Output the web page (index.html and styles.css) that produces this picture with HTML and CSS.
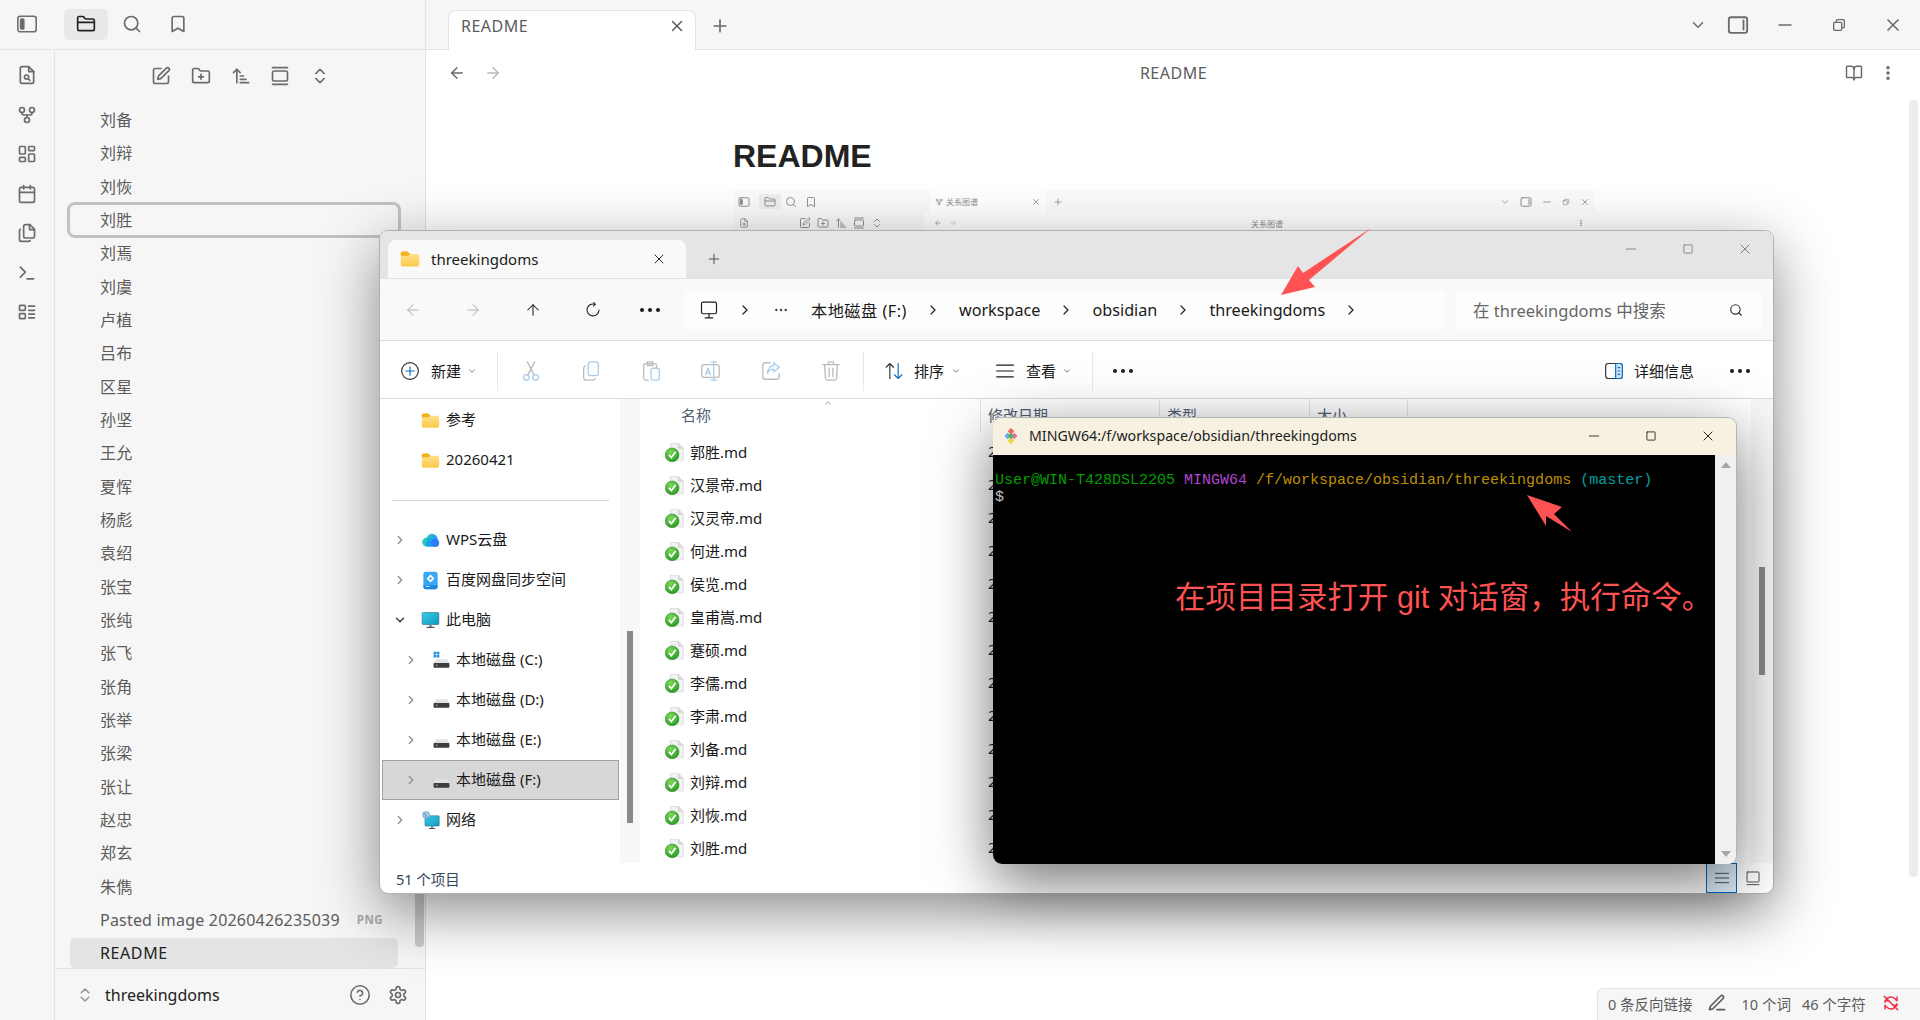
FILE: index.html
```html
<!DOCTYPE html>
<html lang="zh-CN">
<head>
    <meta charset="UTF-8">
    <title>README - threekingdoms - Obsidian</title>
    <link rel="stylesheet" href="styles.css">
</head>
<body>
    <svg class="sprite" xmlns="http://www.w3.org/2000/svg">
        <defs>
            <linearGradient id="folderFill" x1="0" y1="0" x2="0" y2="1"><stop offset="0" stop-color="#ffe793"/><stop offset="1" stop-color="#fcc94d"/></linearGradient>
            <linearGradient id="cloudFill" x1="0" y1="0" x2="1" y2="1"><stop offset="0" stop-color="#27d3a8"/><stop offset="0.55" stop-color="#1e9ff2"/><stop offset="1" stop-color="#2a6cf0"/></linearGradient>
            <linearGradient id="screenFill" x1="0" y1="0" x2="1" y2="1"><stop offset="0" stop-color="#34d0e4"/><stop offset="1" stop-color="#1696c4"/></linearGradient>
            <radialGradient id="okFill" cx="0.4" cy="0.3" r="0.8"><stop offset="0" stop-color="#7ed957"/><stop offset="1" stop-color="#1f9420"/></radialGradient>
        </defs>
        <symbol id="i-panel" viewBox="0 0 24 24"><rect x="2" y="3.5" width="20" height="17" rx="2.5"/><rect x="5" y="6.5" width="3.5" height="11" rx="1" fill="currentColor"/></symbol>
        <symbol id="i-panel-r" viewBox="0 0 24 24"><rect x="2" y="3.5" width="20" height="17" rx="2.5"/><path d="M18 7v10"/></symbol>
        <symbol id="i-folder" viewBox="0 0 24 24"><path d="M20 20a2 2 0 0 0 2-2V8a2 2 0 0 0-2-2h-7.9a2 2 0 0 1-1.69-.9L9.6 3.9A2 2 0 0 0 7.93 3H4a2 2 0 0 0-2 2v13a2 2 0 0 0 2 2Z"/><path d="M2 10h20"/></symbol>
        <symbol id="i-search" viewBox="0 0 24 24"><circle cx="11" cy="11" r="8"/><path d="m21 21-4.3-4.3"/></symbol>
        <symbol id="i-bookmark" viewBox="0 0 24 24"><path d="m19 21-7-4-7 4V5a2 2 0 0 1 2-2h10a2 2 0 0 1 2 2v16z"/></symbol>
        <symbol id="i-filesearch" viewBox="0 0 24 24"><path d="M14 2H6a2 2 0 0 0-2 2v16a2 2 0 0 0 2 2h12a2 2 0 0 0 2-2V8z"/><path d="M14 2v6h6"/><circle cx="11.5" cy="14.5" r="2.5"/><path d="m13.5 16.5 2 2"/></symbol>
        <symbol id="i-graph" viewBox="0 0 24 24"><circle cx="12" cy="18" r="3"/><circle cx="6" cy="6" r="3"/><circle cx="18" cy="6" r="3"/><path d="M18 9v1a2 2 0 0 1-2 2H8a2 2 0 0 1-2-2V9"/><path d="M12 12v3"/></symbol>
        <symbol id="i-dash" viewBox="0 0 24 24"><rect x="3" y="3" width="7" height="9" rx="1"/><rect x="14" y="3" width="7" height="5" rx="1"/><rect x="14" y="12" width="7" height="9" rx="1"/><rect x="3" y="16" width="7" height="5" rx="1"/></symbol>
        <symbol id="i-cal" viewBox="0 0 24 24"><path d="M8 2v4"/><path d="M16 2v4"/><rect x="3" y="4" width="18" height="18" rx="2"/><path d="M3 10h18"/></symbol>
        <symbol id="i-files" viewBox="0 0 24 24"><path d="M15.5 2H10a2 2 0 0 0-2 2v12a2 2 0 0 0 2 2h9a2 2 0 0 0 2-2V7.5z"/><path d="M15 2v6h6"/><path d="M4 7.5a2 2 0 0 0-1 1.7V20a2 2 0 0 0 2 2h9a2 2 0 0 0 1.7-1"/></symbol>
        <symbol id="i-term" viewBox="0 0 24 24"><path d="m4 17 6-6-6-6"/><path d="M12 19h8"/></symbol>
        <symbol id="i-tasks" viewBox="0 0 24 24"><rect x="3" y="4" width="7" height="6" rx="1"/><rect x="3" y="14" width="7" height="6" rx="1"/><path d="M14 5h7M14 10h7M14 14.500h7M14 19h7"/></symbol>
        <symbol id="i-edit" viewBox="0 0 24 24"><path d="M12 3H5a2 2 0 0 0-2 2v14a2 2 0 0 0 2 2h14a2 2 0 0 0 2-2v-7"/><path d="M18.375 2.625a1 1 0 0 1 3 3l-9.013 9.014a2 2 0 0 1-.853.505l-2.873.84a.5.5 0 0 1-.62-.62l.84-2.873a2 2 0 0 1 .506-.852z"/></symbol>
        <symbol id="i-folderplus" viewBox="0 0 24 24"><path d="M12 10v6"/><path d="M9 13h6"/><path d="M20 20a2 2 0 0 0 2-2V8a2 2 0 0 0-2-2h-7.900a2 2 0 0 1-1.690-.9L9.600 3.900A2 2 0 0 0 7.930 3H4a2 2 0 0 0-2 2v13a2 2 0 0 0 2 2Z"/></symbol>
        <symbol id="i-sort" viewBox="0 0 24 24"><path d="m3 8 4-4 4 4"/><path d="M7 4v16"/><path d="M11 12h4"/><path d="M11 16h7"/><path d="M11 20h10"/></symbol>
        <symbol id="i-fold" viewBox="0 0 24 24"><rect x="3" y="6" width="18" height="12" rx="2"/><path d="M3 2h18"/><path d="M3 22h18"/></symbol>
        <symbol id="i-updown" viewBox="0 0 24 24"><path d="m7 15 5 5 5-5"/><path d="m7 9 5-5 5 5"/></symbol>
        <symbol id="i-help" viewBox="0 0 24 24"><circle cx="12" cy="12" r="10"/><path d="M9.090 9a3 3 0 0 1 5.830 1c0 2-3 3-3 3"/><path d="M12 17h.01"/></symbol>
        <symbol id="i-gear" viewBox="0 0 24 24"><path d="M12.220 2h-.44a2 2 0 0 0-2 2v.18a2 2 0 0 1-1 1.730l-.43.25a2 2 0 0 1-2 0l-.15-.08a2 2 0 0 0-2.730.73l-.22.38a2 2 0 0 0 .73 2.730l.15.1a2 2 0 0 1 1 1.720v.51a2 2 0 0 1-1 1.740l-.15.09a2 2 0 0 0-.73 2.730l.22.38a2 2 0 0 0 2.730.73l.15-.08a2 2 0 0 1 2 0l.43.25a2 2 0 0 1 1 1.730V20a2 2 0 0 0 2 2h.44a2 2 0 0 0 2-2v-.18a2 2 0 0 1 1-1.730l.43-.25a2 2 0 0 1 2 0l.15.08a2 2 0 0 0 2.730-.73l.22-.39a2 2 0 0 0-.73-2.730l-.15-.08a2 2 0 0 1-1-1.740v-.5a2 2 0 0 1 1-1.740l.15-.09a2 2 0 0 0 .73-2.730l-.22-.38a2 2 0 0 0-2.730-.73l-.15.08a2 2 0 0 1-2 0l-.43-.25a2 2 0 0 1-1-1.730V4a2 2 0 0 0-2-2z"/><circle cx="12" cy="12" r="3"/></symbol>
        <symbol id="i-x" viewBox="0 0 24 24"><path d="M18 6 6 18"/><path d="m6 6 12 12"/></symbol>
        <symbol id="i-plus" viewBox="0 0 24 24"><path d="M5 12h14"/><path d="M12 5v14"/></symbol>
        <symbol id="i-down" viewBox="0 0 24 24"><path d="m6 9 6 6 6-6"/></symbol>
        <symbol id="i-right" viewBox="0 0 24 24"><path d="m9 6 6 6-6 6"/></symbol>
        <symbol id="i-up" viewBox="0 0 24 24"><path d="m6 15 6-6 6 6"/></symbol>
        <symbol id="i-back" viewBox="0 0 24 24"><path d="m12 19-7-7 7-7"/><path d="M19 12H5"/></symbol>
        <symbol id="i-fwd" viewBox="0 0 24 24"><path d="M5 12h14"/><path d="m12 5 7 7-7 7"/></symbol>
        <symbol id="i-arrowup" viewBox="0 0 24 24"><path d="m5 12 7-7 7 7"/><path d="M12 19V5"/></symbol>
        <symbol id="i-min" viewBox="0 0 24 24"><path d="M4 12h16"/></symbol>
        <symbol id="i-max" viewBox="0 0 24 24"><rect x="5" y="5" width="14" height="14" rx="1"/></symbol>
        <symbol id="i-restore" viewBox="0 0 24 24"><rect x="4" y="8" width="12" height="12" rx="1.500"/><path d="M8 8V5.500A1.500 1.500 0 0 1 9.500 4h9A1.500 1.500 0 0 1 20 5.500v9a1.500 1.500 0 0 1-1.500 1.500H16"/></symbol>
        <symbol id="i-book" viewBox="0 0 24 24"><path d="M12 7v14"/><path d="M3 18a1 1 0 0 1-1-1V4a1 1 0 0 1 1-1h5a4 4 0 0 1 4 4 4 4 0 0 1 4-4h5a1 1 0 0 1 1 1v13a1 1 0 0 1-1 1h-6a3 3 0 0 0-3 3 3 3 0 0 0-3-3z"/></symbol>
        <symbol id="i-kebab" viewBox="0 0 24 24"><circle cx="12" cy="5" r="1.300" fill="currentColor"/><circle cx="12" cy="12" r="1.300" fill="currentColor"/><circle cx="12" cy="19" r="1.300" fill="currentColor"/></symbol>
        <symbol id="i-dots" viewBox="0 0 24 24"><circle cx="4" cy="12" r="2" fill="currentColor" stroke="none"/><circle cx="12" cy="12" r="2" fill="currentColor" stroke="none"/><circle cx="20" cy="12" r="2" fill="currentColor" stroke="none"/></symbol>
        <symbol id="i-pen" viewBox="0 0 24 24"><path d="M12 20h9"/><path d="M16.376 3.622a1 1 0 0 1 3.002 3.002L7.368 18.635a2 2 0 0 1-.855.506l-2.872.838a.5.5 0 0 1-.62-.62l.838-2.872a2 2 0 0 1 .506-.854z"/></symbol>
        <symbol id="i-nosync" viewBox="0 0 24 24"><path d="M3 3l18 18"/><path d="M4 11a8 8 0 0 1 13-5l3 3V4"/><path d="M20 13a8 8 0 0 1-13 5l-3-3v5"/><path d="M4 9h5M15 15h5"/></symbol>
        <symbol id="i-refresh" viewBox="0 0 24 24"><path d="M14.500 4.300A8 8 0 1 0 20 12"/><path d="M13 2l2 2.500L12.500 7"/></symbol>
        <symbol id="i-pc" viewBox="0 0 24 24"><rect x="3" y="2.500" width="18" height="14" rx="2"/><path d="M12 16.500V21M7.500 21.500h9"/></symbol>
        <symbol id="i-pluscircle" viewBox="0 0 24 24"><circle cx="12" cy="12" r="10" stroke="#333"/><path d="M12 7v10M7 12h10" stroke="#0a6fc2"/></symbol>
        <symbol id="i-cut" viewBox="0 0 24 24"><circle cx="7" cy="19" r="3" stroke="#a8cdec"/><circle cx="17" cy="19" r="3" stroke="#a8cdec"/><path d="M8.500 16.500 16 2M15.500 16.500 8 2" stroke="#bbb"/></symbol>
        <symbol id="i-copy" viewBox="0 0 24 24"><rect x="9" y="2" width="11" height="15" rx="2.500" stroke="#a8cdec"/><path d="M6 6.500A2.500 2.500 0 0 0 4 9v10a3 3 0 0 0 3 3h7a2.500 2.500 0 0 0 2.500-2" stroke="#bbb"/></symbol>
        <symbol id="i-paste" viewBox="0 0 24 24"><rect x="12" y="9" width="9" height="13" rx="2" stroke="#a8cdec"/><path d="M9 22H6a2 2 0 0 1-2-2V6a2 2 0 0 1 2-2h10a2 2 0 0 1 2 2v2M8 2h6v4H8z" stroke="#bbb"/></symbol>
        <symbol id="i-rename" viewBox="0 0 24 24"><path d="M12 2h6M12 22h6M15 2v20" stroke="#a8cdec"/><rect x="2" y="5" width="19" height="14" rx="2.500" stroke="#bbb"/><path d="m6 16 2.800-7L11.500 16M7 14h3.500" stroke="#a8cdec"/></symbol>
        <symbol id="i-share" viewBox="0 0 24 24"><path d="M11 3H6a3 3 0 0 0-3 3v12a3 3 0 0 0 3 3h12a3 3 0 0 0 3-3v-3" stroke="#bbb"/><path d="M15 3l6 5-6 5v-3c-4 0-6 2-7 5 0-5 3-9 7-9z" stroke="#a8cdec"/></symbol>
        <symbol id="i-trash" viewBox="0 0 24 24"><path d="M3 5h18M9 5V3a1 1 0 0 1 1-1h4a1 1 0 0 1 1 1v2M5 5l1 15a2 2 0 0 0 2 2h8a2 2 0 0 0 2-2l1-15M10 9v9M14 9v9" stroke="#bbb"/></symbol>
        <symbol id="i-sortwin" viewBox="0 0 24 24"><path d="M7 21V3M2.500 7.500 7 3l4.500 4.500" stroke="#333"/><path d="M17 3v18M12.500 16.500 17 21l4.500-4.500" stroke="#0a6fc2"/></symbol>
        <symbol id="i-lines" viewBox="0 0 24 24"><path d="M2 5h20M2 12h20M2 19h20"/></symbol>
        <symbol id="i-details" viewBox="0 0 24 24"><rect x="2" y="3" width="20" height="18" rx="3" stroke="#333"/><path d="M14 3h5a3 3 0 0 1 3 3v12a3 3 0 0 1-3 3h-5z" fill="#cfe6fa" stroke="#0a6fc2"/><path d="M17 8h2M17 12h2M17 16h2" stroke="#0a6fc2"/></symbol>
        <symbol id="i-viewtile" viewBox="0 0 24 24"><rect x="3" y="3" width="18" height="15" rx="1"/><path d="M3 22h18"/></symbol>
        <symbol id="w-folder" viewBox="0 0 24 24"><path d="M1 5a2 2 0 0 1 2-2h6l3 3h9a2 2 0 0 1 2 2v11a2 2 0 0 1-2 2H3a2 2 0 0 1-2-2z" fill="url(#folderFill)"/><path d="M1 5a2 2 0 0 1 2-2h6l3 3-2 2H1z" fill="#f2b01e"/></symbol>
        <symbol id="w-cloud" viewBox="0 0 24 24"><circle cx="7" cy="14" r="5.500" fill="#23cfb4"/><circle cx="14" cy="10.500" r="7" fill="url(#cloudFill)"/><rect x="6" y="13" width="14" height="7" rx="3" fill="#1c9df0"/><circle cx="18" cy="15" r="5" fill="#2b7df0"/></symbol>
        <symbol id="w-baidu" viewBox="0 0 24 24"><rect x="3" y="1" width="18" height="22" rx="3" fill="#3aa7f5"/><path d="M3 18h18v2a3 3 0 0 1-3 3H6a3 3 0 0 1-3-3z" fill="#1d86e0"/><path d="M12 4.500 17 9.500l-5 5-5-5z" fill="#fff"/><path d="M12 7.500 14 9.500l-2 2-2-2z" fill="#3aa7f5"/><path d="M6 19.500h5" stroke="#d4ecff" stroke-width="1.200"/></symbol>
        <symbol id="w-pc" viewBox="0 0 24 24"><rect x="1.500" y="2" width="21" height="15" rx="1" fill="url(#screenFill)" stroke="#2d6e87" stroke-width="0.800"/><rect x="10.500" y="17" width="3" height="3.500" fill="#6b8894"/><rect x="7" y="20" width="10" height="1.500" fill="#556"/></symbol>
        <symbol id="w-drive" viewBox="0 0 24 24"><path d="M5 10.500h14l3 5H2z" fill="#e2e2e2"/><rect x="2" y="15" width="20" height="6" rx="1" fill="#3d3d3d"/><rect x="5" y="17.300" width="2" height="1.400" fill="#7ed36b"/></symbol>
        <symbol id="w-drivec" viewBox="0 0 24 24"><use href="#w-drive"/><path d="M2 1h3.300v3.300H2zM6 1h3.300v3.300H6zM2 5h3.300v3.300H2zM6 5h3.300v3.300H6z" fill="#1f8fe8"/></symbol>
        <symbol id="w-net" viewBox="0 0 24 24"><rect x="5" y="6" width="18" height="13" rx="1" fill="url(#screenFill)" stroke="#2d6e87" stroke-width="0.700"/><rect x="12.500" y="19" width="3" height="2.500" fill="#6b8894"/><rect x="10" y="21.500" width="8" height="1.200" fill="#556"/><circle cx="6.500" cy="5" r="4.500" fill="#9fc8e6" stroke="#5c8fb5" stroke-width="0.600"/><path d="M3 3c2 0 3 1 3 3s2 3 3 2" stroke="#3d7ca8" fill="none" stroke-width="1"/></symbol>
        <symbol id="w-md" viewBox="0 0 24 24"><path d="M7 0.500h10l6 6v16H7z" fill="#f3f3f3" stroke="#d2d2d2" stroke-width="0.900"/><path d="M17 0.500v6h6" fill="#dedede" stroke="#c8c8c8" stroke-width="0.900"/><circle cx="9" cy="15" r="8.700" fill="url(#okFill)" stroke="#197d1b" stroke-width="0.600"/><path d="M5 15l3 3.500L13.500 11" fill="none" stroke="#fff" stroke-width="2.200"/></symbol>
        <symbol id="w-git" viewBox="0 0 24 24"><path d="M7 2 12 7 7 12 2 7z" transform="translate(0 5)" fill="#6ba6f2"/><path d="M12 0l5 5-5 5-5-5z" fill="#ef6a5a"/><path d="M17 7l5 5-5 5-5-5z" fill="#f06ab0"/><path d="M12 14l5 5-5 5-5-5z" fill="#f5cf45"/><path d="M12 7l5 5-5 5-5-5z" fill="#59b25a"/></symbol>
    </svg>

    <div class="app">
        <aside class="side">
            <div class="side-top">
                <svg class="ic ic-22 side-toggle"><use href="#i-panel"/></svg>
                <span class="side-tab is-on"><svg class="ic ic-20"><use href="#i-folder"/></svg></span>
                <span class="side-tab"><svg class="ic ic-20"><use href="#i-search"/></svg></span>
                <span class="side-tab"><svg class="ic ic-20"><use href="#i-bookmark"/></svg></span>
            </div>
            <div class="side-body">
                <nav class="ribbon">
                    <svg class="ic ic-20"><use href="#i-filesearch"/></svg>
                    <svg class="ic ic-20"><use href="#i-graph"/></svg>
                    <svg class="ic ic-20"><use href="#i-dash"/></svg>
                    <svg class="ic ic-20"><use href="#i-cal"/></svg>
                    <svg class="ic ic-20"><use href="#i-files"/></svg>
                    <svg class="ic ic-20"><use href="#i-term"/></svg>
                    <svg class="ic ic-20"><use href="#i-tasks"/></svg>
                </nav>
                <section class="panel">
                    <div class="panel-nav">
                        <svg class="ic ic-20"><use href="#i-edit"/></svg>
                        <svg class="ic ic-20"><use href="#i-folderplus"/></svg>
                        <svg class="ic ic-20"><use href="#i-sort"/></svg>
                        <svg class="ic ic-20"><use href="#i-fold"/></svg>
                        <svg class="ic ic-20"><use href="#i-updown"/></svg>
                    </div>
                    <div class="tree-list">
                        <div class="note">刘备</div>
                        <div class="note">刘辩</div>
                        <div class="note">刘恢</div>
                        <div class="note is-focus">刘胜</div>
                        <div class="note">刘焉</div>
                        <div class="note">刘虞</div>
                        <div class="note">卢植</div>
                        <div class="note">吕布</div>
                        <div class="note">区星</div>
                        <div class="note">孙坚</div>
                        <div class="note">王允</div>
                        <div class="note">夏恽</div>
                        <div class="note">杨彪</div>
                        <div class="note">袁绍</div>
                        <div class="note">张宝</div>
                        <div class="note">张纯</div>
                        <div class="note">张飞</div>
                        <div class="note">张角</div>
                        <div class="note">张举</div>
                        <div class="note">张梁</div>
                        <div class="note">张让</div>
                        <div class="note">赵忠</div>
                        <div class="note">郑玄</div>
                        <div class="note">朱儁</div>
                        <div class="note">Pasted image 20260426235039<span class="note-tag">PNG</span></div>
                        <div class="note is-active">README</div>
                        <div class="side-thumb"></div>
                    </div>
                    <div class="vault">
                        <svg class="ic ic-18 vault-updown"><use href="#i-updown"/></svg>
                        <span class="vault-name">threekingdoms</span>
                        <svg class="ic ic-22 vault-help"><use href="#i-help"/></svg>
                        <svg class="ic ic-20"><use href="#i-gear"/></svg>
                    </div>
                </section>
            </div>
        </aside>

        <main class="main">
            <header class="tabbar">
                <div class="tab">
                    <span class="tab-name">README</span>
                    <svg class="ic ic-18"><use href="#i-x"/></svg>
                </div>
                <svg class="ic ic-20 tab-add"><use href="#i-plus"/></svg>
                <div class="tabbar-right">
                    <svg class="ic ic-18"><use href="#i-down"/></svg>
                    <svg class="ic ic-22"><use href="#i-panel-r"/></svg>
                    <svg class="ic ic-18 win-btn"><use href="#i-min"/></svg>
                    <svg class="ic ic-16 win-btn"><use href="#i-restore"/></svg>
                    <svg class="ic ic-20 win-btn"><use href="#i-x"/></svg>
                </div>
            </header>
            <div class="viewbar">
                <svg class="ic ic-18"><use href="#i-back"/></svg>
                <svg class="ic ic-18 is-dim"><use href="#i-fwd"/></svg>
                <span class="view-title">README</span>
                <svg class="ic ic-18"><use href="#i-book"/></svg>
                <svg class="ic ic-18"><use href="#i-kebab"/></svg>
            </div>
            <article class="doc">
                <h1 class="doc-title">README</h1>
                <div class="shot">
                    <div class="shot-top">
                        <div class="shot-side">
                            <svg class="ic ic-12"><use href="#i-panel"/></svg>
                            <span class="shot-on"><svg class="ic ic-12"><use href="#i-folder"/></svg></span>
                            <svg class="ic ic-12"><use href="#i-search"/></svg>
                            <svg class="ic ic-12 shot-mark"><use href="#i-bookmark"/></svg>
                        </div>
                        <div class="shot-tab">
                            <svg class="ic ic-8"><use href="#i-graph"/></svg>
                            <span>关系图谱</span>
                            <svg class="ic ic-10 shot-x"><use href="#i-x"/></svg>
                        </div>
                        <svg class="ic ic-10 shot-add"><use href="#i-plus"/></svg>
                        <div class="shot-right">
                            <svg class="ic ic-10"><use href="#i-down"/></svg>
                            <svg class="ic ic-12"><use href="#i-panel-r"/></svg>
                            <svg class="ic ic-10"><use href="#i-min"/></svg>
                            <svg class="ic ic-8"><use href="#i-restore"/></svg>
                            <svg class="ic ic-10"><use href="#i-x"/></svg>
                        </div>
                    </div>
                    <div class="shot-row">
                        <div class="shot-rail"><svg class="ic ic-10"><use href="#i-filesearch"/></svg></div>
                        <div class="shot-tools">
                            <svg class="ic ic-12"><use href="#i-edit"/></svg>
                            <svg class="ic ic-12"><use href="#i-folderplus"/></svg>
                            <svg class="ic ic-12"><use href="#i-sort"/></svg>
                            <svg class="ic ic-12"><use href="#i-fold"/></svg>
                            <svg class="ic ic-12"><use href="#i-updown"/></svg>
                        </div>
                        <div class="shot-view">
                            <svg class="ic ic-8"><use href="#i-back"/></svg>
                            <svg class="ic ic-8 is-dim"><use href="#i-fwd"/></svg>
                            <span class="shot-title">关系图谱</span>
                            <svg class="ic ic-8"><use href="#i-kebab"/></svg>
                        </div>
                    </div>
                </div>
            </article>
            <div class="doc-thumb"></div>
            <footer class="statusbar">
                <span>0 条反向链接</span>
                <svg class="ic ic-20 status-pen"><use href="#i-pen"/></svg>
                <span>10 个词</span>
                <span>46 个字符</span>
                <svg class="ic ic-18 status-sync"><use href="#i-nosync"/></svg>
            </footer>
        </main>
    </div>

    <!-- file explorer window -->
    <section class="explorer">
        <div class="ex-title">
            <div class="ex-tab">
                <svg class="ic-w ic-20"><use href="#w-folder"/></svg>
                <span class="ex-tab-name">threekingdoms</span>
                <svg class="ic ic-16 ex-thin"><use href="#i-x"/></svg>
            </div>
            <svg class="ic ic-16 ex-add ex-thin"><use href="#i-plus"/></svg>
            <div class="ex-wins">
                <span class="ex-win"><svg class="ic ic-14 ex-thin"><use href="#i-min"/></svg></span>
                <span class="ex-win"><svg class="ic ic-14 ex-thin"><use href="#i-max"/></svg></span>
                <span class="ex-win"><svg class="ic ic-16 ex-thin"><use href="#i-x"/></svg></span>
            </div>
        </div>
        <div class="ex-nav">
            <span class="ex-navbtn is-off"><svg class="ic ic-18 ex-thin"><use href="#i-back"/></svg></span>
            <span class="ex-navbtn is-off"><svg class="ic ic-18 ex-thin"><use href="#i-fwd"/></svg></span>
            <span class="ex-navbtn"><svg class="ic ic-18 ex-thin"><use href="#i-arrowup"/></svg></span>
            <span class="ex-navbtn"><svg class="ic ic-18 ex-thin"><use href="#i-refresh"/></svg></span>
            <span class="ex-navbtn ex-navdots"><svg class="ic ic-24"><use href="#i-dots"/></svg></span>
            <div class="ex-addr">
                <svg class="ic ic-20 ex-thin"><use href="#i-pc"/></svg>
                <svg class="ic ic-16 crumb-sep"><use href="#i-right"/></svg>
                <svg class="ic ic-14 crumb-more"><use href="#i-dots"/></svg>
                <span class="crumb crumb-drive">本地磁盘 (F:)</span>
                <svg class="ic ic-16 crumb-sep"><use href="#i-right"/></svg>
                <span class="crumb">workspace</span>
                <svg class="ic ic-16 crumb-sep"><use href="#i-right"/></svg>
                <span class="crumb">obsidian</span>
                <svg class="ic ic-16 crumb-sep"><use href="#i-right"/></svg>
                <span class="crumb">threekingdoms</span>
                <svg class="ic ic-16 crumb-sep"><use href="#i-right"/></svg>
            </div>
            <div class="ex-search">
                <span>在 threekingdoms 中搜索</span>
                <svg class="ic ic-14"><use href="#i-search"/></svg>
            </div>
        </div>
        <div class="ex-tools">
            <div class="tool-label tool-new">
                <svg class="ic ic-20 ex-thin"><use href="#i-pluscircle"/></svg>
                <span>新建</span>
                <svg class="ic ic-10 ex-thin"><use href="#i-down"/></svg>
            </div>
            <i class="tool-div"></i>
            <span class="tool"><svg class="ic ic-22 ex-thin"><use href="#i-cut"/></svg></span>
            <span class="tool"><svg class="ic ic-22 ex-thin"><use href="#i-copy"/></svg></span>
            <span class="tool"><svg class="ic ic-22 ex-thin"><use href="#i-paste"/></svg></span>
            <span class="tool"><svg class="ic ic-22 ex-thin"><use href="#i-rename"/></svg></span>
            <span class="tool"><svg class="ic ic-22 ex-thin"><use href="#i-share"/></svg></span>
            <span class="tool"><svg class="ic ic-22 ex-thin"><use href="#i-trash"/></svg></span>
            <i class="tool-div"></i>
            <div class="tool-label tool-sort">
                <svg class="ic ic-20 ex-thin"><use href="#i-sortwin"/></svg>
                <span>排序</span>
                <svg class="ic ic-10 ex-thin"><use href="#i-down"/></svg>
            </div>
            <div class="tool-label tool-view">
                <svg class="ic ic-20 ex-thin"><use href="#i-lines"/></svg>
                <span>查看</span>
                <svg class="ic ic-10 ex-thin"><use href="#i-down"/></svg>
            </div>
            <i class="tool-div tool-div-last"></i>
            <span class="tool tool-more"><svg class="ic ic-24"><use href="#i-dots"/></svg></span>
            <div class="tool-label tool-info">
                <svg class="ic ic-20 ex-thin"><use href="#i-details"/></svg>
                <span>详细信息</span>
            </div>
            <span class="tool tool-end"><svg class="ic ic-24"><use href="#i-dots"/></svg></span>
        </div>
        <div class="ex-body">
            <div class="ex-tree">
                <div class="tnode"><svg class="ic tchev is-none"><use href="#i-right"/></svg><svg class="ic-w ic-19"><use href="#w-folder"/></svg><span>参考</span></div>
                <div class="tnode"><svg class="ic tchev is-none"><use href="#i-right"/></svg><svg class="ic-w ic-19"><use href="#w-folder"/></svg><span>20260421</span></div>
                <hr class="tsep">
                <div class="tnode"><svg class="ic tchev"><use href="#i-right"/></svg><svg class="ic-w ic-19"><use href="#w-cloud"/></svg><span>WPS云盘</span></div>
                <div class="tnode"><svg class="ic tchev"><use href="#i-right"/></svg><svg class="ic-w ic-19"><use href="#w-baidu"/></svg><span>百度网盘同步空间</span></div>
                <div class="tnode"><svg class="ic tchev is-open"><use href="#i-down"/></svg><svg class="ic-w ic-19"><use href="#w-pc"/></svg><span>此电脑</span></div>
                <div class="tnode is-child"><svg class="ic tchev"><use href="#i-right"/></svg><svg class="ic-w ic-19"><use href="#w-drivec"/></svg><span>本地磁盘 (C:)</span></div>
                <div class="tnode is-child"><svg class="ic tchev"><use href="#i-right"/></svg><svg class="ic-w ic-19"><use href="#w-drive"/></svg><span>本地磁盘 (D:)</span></div>
                <div class="tnode is-child"><svg class="ic tchev"><use href="#i-right"/></svg><svg class="ic-w ic-19"><use href="#w-drive"/></svg><span>本地磁盘 (E:)</span></div>
                <div class="tnode is-child is-sel"><svg class="ic tchev"><use href="#i-right"/></svg><svg class="ic-w ic-19"><use href="#w-drive"/></svg><span>本地磁盘 (F:)</span></div>
                <div class="tnode"><svg class="ic tchev"><use href="#i-right"/></svg><svg class="ic-w ic-19"><use href="#w-net"/></svg><span>网络</span></div>
            </div>
            <div class="ex-gutter"><div class="ex-gutter-thumb"></div></div>
            <div class="ex-files">
                <div class="fhead">
                    <span class="fhead-cell fhead-name">名称<svg class="ic ic-10 fhead-sort ex-thin"><use href="#i-up"/></svg></span>
                    <span class="fhead-cell">修改日期</span>
                    <span class="fhead-cell">类型</span>
                    <span class="fhead-cell">大小</span>
                </div>
                <div class="frow"><svg class="ic-w ic-19"><use href="#w-md"/></svg><span class="fname">郭胜.md</span><span>2026/4/26</span></div>
                <div class="frow"><svg class="ic-w ic-19"><use href="#w-md"/></svg><span class="fname">汉景帝.md</span><span>2026/4/26</span></div>
                <div class="frow"><svg class="ic-w ic-19"><use href="#w-md"/></svg><span class="fname">汉灵帝.md</span><span>2026/4/26</span></div>
                <div class="frow"><svg class="ic-w ic-19"><use href="#w-md"/></svg><span class="fname">何进.md</span><span>2026/4/26</span></div>
                <div class="frow"><svg class="ic-w ic-19"><use href="#w-md"/></svg><span class="fname">侯览.md</span><span>2026/4/26</span></div>
                <div class="frow"><svg class="ic-w ic-19"><use href="#w-md"/></svg><span class="fname">皇甫嵩.md</span><span>2026/4/26</span></div>
                <div class="frow"><svg class="ic-w ic-19"><use href="#w-md"/></svg><span class="fname">蹇硕.md</span><span>2026/4/26</span></div>
                <div class="frow"><svg class="ic-w ic-19"><use href="#w-md"/></svg><span class="fname">李儒.md</span><span>2026/4/26</span></div>
                <div class="frow"><svg class="ic-w ic-19"><use href="#w-md"/></svg><span class="fname">李肃.md</span><span>2026/4/26</span></div>
                <div class="frow"><svg class="ic-w ic-19"><use href="#w-md"/></svg><span class="fname">刘备.md</span><span>2026/4/26</span></div>
                <div class="frow"><svg class="ic-w ic-19"><use href="#w-md"/></svg><span class="fname">刘辩.md</span><span>2026/4/26</span></div>
                <div class="frow"><svg class="ic-w ic-19"><use href="#w-md"/></svg><span class="fname">刘恢.md</span><span>2026/4/26</span></div>
                <div class="frow"><svg class="ic-w ic-19"><use href="#w-md"/></svg><span class="fname">刘胜.md</span><span>2026/4/26</span></div>
            </div>
            <div class="ex-rail"><div class="ex-rail-thumb"></div></div>
        </div>
        <div class="ex-status">
            <span class="ex-count">51 个项目</span>
            <span class="ex-views">
                <span class="ex-view is-on"><svg class="ic ic-16 ex-thin"><use href="#i-lines"/></svg></span>
                <span class="ex-view"><svg class="ic ic-16 ex-thin"><use href="#i-viewtile"/></svg></span>
            </span>
        </div>
    </section>

    <!-- git bash window -->
    <section class="mintty">
        <div class="mt-title">
            <svg class="ic-w ic-16"><use href="#w-git"/></svg>
            <span class="mt-name">MINGW64:/f/workspace/obsidian/threekingdoms</span>
            <span class="mt-win"><svg class="ic ic-14 mt-stroke"><use href="#i-min"/></svg></span>
            <span class="mt-win"><svg class="ic ic-14 mt-stroke"><use href="#i-max"/></svg></span>
            <span class="mt-win"><svg class="ic ic-16 mt-stroke"><use href="#i-x"/></svg></span>
        </div>
        <div class="mt-body">
            <pre class="mt-screen"><span class="c-green">User@WIN-T428DSL2205</span> <span class="c-purple">MINGW64</span> <span class="c-yellow">/f/workspace/obsidian/threekingdoms</span> <span class="c-cyan">(master)</span>
<span class="c-grey">$</span></pre>
            <div class="mt-bar"><i class="mt-up"></i><i class="mt-down"></i></div>
        </div>
    </section>

    <!-- red annotations drawn on the picture -->
    <svg class="marks" viewBox="0 0 1920 1020" xmlns="http://www.w3.org/2000/svg">
        <path d="M1371 228 1309 280 1315 287 1281 295 1298 266 1303 273Z"/>
        <path d="M1527 495 1562 507 1554 514 1572 532 1546 516 1546 526Z"/>
    </svg>
    <div class="mark-text">在项目目录打开 git 对话窗，执行命令。</div>
</body>
</html>
```
FILE: styles.css
```css
* {
    box-sizing: border-box;
}
html, body {
    margin: 0;
    padding: 0;
    height: 1020px;
    overflow: hidden;
}
body {
    position: relative;
    background: #fff;
    color: #5c5c5c;
    font-family: "Noto Sans", "Noto Sans CJK SC", sans-serif;
    font-size: 16px;
}
.sprite {
    position: absolute;
    width: 0;
    height: 0;
}

/* icons */
.ic {
    flex: none;
    fill: none;
    stroke: currentColor;
    stroke-width: 2;
    stroke-linecap: round;
    stroke-linejoin: round;
}
.ic-w { flex: none; }
.ic-8 { width: 8px; height: 8px; }
.ic-10 { width: 10px; height: 10px; }
.ic-12 { width: 12px; height: 12px; }
.ic-14 { width: 14px; height: 14px; }
.ic-16 { width: 16px; height: 16px; }
.ic-18 { width: 18px; height: 18px; }
.ic-19 { width: 19px; height: 19px; }
.ic-20 { width: 20px; height: 20px; }
.ic-22 { width: 22px; height: 22px; }
.ic-24 { width: 24px; height: 24px; }
.is-dim { opacity: .45; }

/* obsidian shell */
.app {
    display: flex;
    height: 1020px;
}
.side {
    width: 426px;
    flex: none;
    display: flex;
    flex-direction: column;
    background: #f6f6f6;
    border-right: 1px solid #e3e3e3;
}
.side-top {
    height: 50px;
    flex: none;
    display: flex;
    align-items: center;
    padding-bottom: 1px;
    border-bottom: 1px solid #e3e3e3;
    color: #6b6b6b;
}
.side-toggle {
    margin-left: 16px;
    margin-right: 26px;
    stroke-width: 1.7;
}
.side-tab {
    width: 44px;
    height: 31px;
    margin-right: 2px;
    margin-top: 0;
    display: flex;
    align-items: center;
    justify-content: center;
    border-radius: 5px;
}
.side-tab.is-on {
    background: #e9e9e9;
    color: #222;
}
.side-body {
    flex: 1;
    min-height: 0;
    display: flex;
}
.ribbon {
    width: 55px;
    flex: none;
    display: flex;
    flex-direction: column;
    align-items: center;
    gap: 19.500px;
    padding-top: 15px;
    border-right: 1px solid #e3e3e3;
    color: #6b6b6b;
}
.panel {
    flex: 1;
    min-width: 0;
    display: flex;
    flex-direction: column;
}
.panel-nav {
    height: 52px;
    margin-bottom: 2px;
    flex: none;
    display: flex;
    align-items: center;
    justify-content: center;
    gap: 19.700px;
    padding-left: 1px;
    color: #6b6b6b;
}
.tree-list {
    position: relative;
    flex: 1;
    min-height: 0;
    overflow: hidden;
    padding: 1px 27px 0 15px;
}
.note {
    height: 30px;
    margin-bottom: 3.330px;
    padding-left: 30px;
    display: flex;
    align-items: center;
    border-radius: 5px;
    line-height: 30px;
    letter-spacing: .2px;
    white-space: nowrap;
}
.note.is-focus {
    box-shadow: 0 0 0 3px #c2c2c2;
}
.note.is-active {
    background: #e4e4e4;
    color: #222;
    letter-spacing: .6px;
}
.note-tag {
    margin-left: 17px;
    color: #ababab;
    font-size: 11.500px;
    font-weight: 700;
    letter-spacing: .5px;
}
.side-thumb {
    position: absolute;
    right: 1px;
    bottom: 21px;
    width: 9px;
    height: 220px;
    border-radius: 4px;
    background: #cbcbcb;
}
.vault {
    height: 52px;
    flex: none;
    display: flex;
    align-items: center;
    padding-left: 21px;
    border-top: 1px solid #e3e3e3;
    color: #6b6b6b;
}
.vault-updown {
    opacity: .7;
}
.vault-name {
    margin-left: 11px;
    color: #222;
    font-size: 16px;
}
.vault-help {
    margin-left: auto;
    stroke-width: 1.7;
}
.vault .ic-20 {
    margin: 0 17px 0 17px;
}
.main {
    position: relative;
    flex: 1;
    min-width: 0;
    display: flex;
    flex-direction: column;
}
.tabbar {
    height: 50px;
    flex: none;
    display: flex;
    align-items: flex-end;
    padding-left: 22px;
    background: #f6f6f6;
    border-bottom: 1px solid #e3e3e3;
}
.tab {
    width: 248px;
    height: 40px;
    margin-bottom: -1px;
    display: flex;
    align-items: center;
    justify-content: space-between;
    padding: 0 9px 10px 12px;
    background: #fff;
    border: 1px solid #e3e3e3;
    border-bottom: none;
    border-radius: 8px 8px 0 0;
    color: #5c5c5c;
    font-size: 16px;
    letter-spacing: .5px;
}
.tab-add {
    margin: 0 0 13px 14px;
    color: #6b6b6b;
}
.tabbar-right {
    height: 49px;
    margin-left: auto;
    display: flex;
    align-items: center;
    color: #6b6b6b;
}
.tabbar-right .ic-18 { margin-right: 20px; }
.tabbar-right .ic-22 { margin-right: 27px; }
.tabbar-right .ic-16 { margin: 0 36px 0 0; }
.tabbar-right .win-btn.ic-18 { margin-right: 37px; }
.tabbar-right .win-btn.ic-20 { margin-right: 17px; }
.viewbar {
    height: 47px;
    flex: none;
    display: flex;
    align-items: center;
    padding: 0 23px 1px 22px;
    color: #6b6b6b;
}
.viewbar .is-dim {
    margin-left: 18px;
}
.view-title {
    flex: 1;
    text-align: center;
    font-size: 16px;
    letter-spacing: .5px;
    color: #5c5c5c;
}
.viewbar .ic:last-child {
    margin-left: 16px;
}
.doc {
    padding-left: 307px;
}
.doc-title {
    margin: 37px 0 0;
    height: 56px;
    color: #222;
    font-family: "Liberation Sans", "Noto Sans CJK SC", sans-serif;
    font-size: 32px;
    font-weight: 700;
    line-height: 44px;
}
.shot {
    width: 862px;
    background: #fff;
    color: #909090;
    font-size: 8px;
}
.shot-top {
    height: 23px;
    display: flex;
    align-items: center;
    background: #fafafa;
}
.shot-side {
    width: 191px;
    display: flex;
    align-items: center;
    gap: 4px;
    padding-left: 5px;
}
.shot-on {
    width: 22px;
    height: 15px;
    margin-left: 5px;
    display: flex;
    align-items: center;
    justify-content: center;
    border-radius: 2px;
    background: #eee;
}
.shot-mark {
    margin-left: 4px;
}
.shot-tab {
    width: 116px;
    height: 23px;
    margin-left: 6px;
    display: flex;
    align-items: center;
    gap: 3px;
    padding: 0 5px;
    background: #fff;
    border-radius: 4px 4px 0 0;
    white-space: nowrap;
}
.shot-x {
    margin-left: auto;
}
.shot-add {
    margin-left: 7px;
}
.shot-right {
    margin-left: auto;
    display: flex;
    align-items: center;
    gap: 10px;
    padding-right: 5px;
}
.shot-row {
    height: 20px;
    display: flex;
    align-items: center;
}
.shot-rail {
    width: 24px;
    height: 20px;
    padding-left: 6px;
    display: flex;
    align-items: center;
    background: #fafafa;
}
.shot-tools {
    width: 167px;
    height: 20px;
    display: flex;
    align-items: center;
    justify-content: center;
    gap: 6px;
    background: #fafafa;
}
.shot-view {
    flex: 1;
    display: flex;
    align-items: center;
    gap: 7px;
    padding: 0 10px 0 10px;
}
.shot-title {
    flex: 1;
    text-align: center;
}
.doc-thumb {
    position: absolute;
    top: 100px;
    right: 2px;
    width: 9px;
    height: 777px;
    border-radius: 4px;
    background: #ededed;
}
.statusbar {
    position: absolute;
    right: 0;
    bottom: 0;
    width: 323px;
    height: 32px;
    display: flex;
    align-items: center;
    padding: 0 0 3px 10px;
    background: #f6f6f6;
    border: 1px solid #e3e3e3;
    border-width: 1px 0 0 1px;
    border-top-left-radius: 6px;
    color: #5c5c5c;
    font-size: 14.500px;
}
.status-pen {
    margin: 0 15px 0 14px;
}
.statusbar span + span {
    margin-left: 11px;
}
.status-sync {
    margin-left: 16px;
    color: #ee3048;
}

/* windows on the desktop */
.explorer {
    position: absolute;
    left: 379px;
    top: 230px;
    width: 1395px;
    height: 664px;
    display: flex;
    flex-direction: column;
    overflow: hidden;
    background: #fff;
    border: 1px solid #b0b0b0;
    border-radius: 9px;
    color: #1a1a1a;
    font-size: 15px;
}
.ex-thin {
    stroke-width: 1.400;
}
.ex-title {
    height: 48px;
    flex: none;
    display: flex;
    align-items: flex-end;
    padding-left: 8px;
    background: #e5e5e5;
    border-bottom: 1px solid #e0e0e0;
}
.ex-tab {
    width: 298px;
    height: 38px;
    display: flex;
    align-items: center;
    padding: 0 19px 0 12px;
    background: #f9f9f9;
    border-radius: 8px 8px 0 0;
}
.ex-tab-name {
    margin-left: 11px;
    flex: 1;
    font-size: 15px;
}
.ex-add {
    margin: 0 0 11px 20px;
    color: #444;
}
.ex-wins {
    height: 36px;
    margin-left: auto;
    align-self: flex-start;
    display: flex;
    align-items: center;
    color: #777;
}
.ex-win {
    width: 57px;
    height: 36px;
    display: flex;
    align-items: center;
    justify-content: center;
}
.ex-nav {
    height: 62px;
    flex: none;
    display: flex;
    align-items: center;
    padding-left: 3px;
    background: #f9f9f9;
    border-bottom: 1px solid #dcdcdc;
}
.ex-navbtn {
    width: 60px;
    display: flex;
    justify-content: center;
}
.ex-navbtn.is-off {
    color: #b4b4b4;
}
.ex-navdots {
    width: 54px;
}
.ex-addr {
    width: 761px;
    height: 40px;
    margin-left: 7px;
    display: flex;
    align-items: center;
    padding-left: 15px;
    background: #fdfdfd;
    border-radius: 5px;
    font-size: 16.200px;
    white-space: nowrap;
}
.crumb-drive {
    letter-spacing: .5px;
}
.crumb-sep {
    margin: 0 18px;
    stroke-width: 1.800;
    color: #222;
}
.crumb-more {
    width: 20px;
    margin-right: 20px;
    color: #333;
}
.ex-search {
    width: 307px;
    height: 40px;
    margin-left: 10px;
    display: flex;
    align-items: center;
    justify-content: space-between;
    padding: 0 19px 0 18px;
    background: #fdfdfd;
    border-radius: 5px;
    color: #666;
    font-size: 16.500px;
}
.ex-search .ic {
    color: #333;
}
.ex-tools {
    height: 58px;
    flex: none;
    display: flex;
    align-items: center;
    padding: 2px 0 0 20px;
    border-bottom: 1px solid #dcdcdc;
}
.tool-label {
    display: flex;
    align-items: center;
    white-space: nowrap;
}
.tool-new span { margin: 0 6px 0 11px; }
.tool-sort { margin-left: 20px; }
.tool-sort span { margin: 0 7px 0 10px; }
.tool-view { margin-left: 34px; }
.tool-view span { margin: 0 6px 0 11px; }
.tool-info { margin-left: auto; }
.tool-info span { margin-left: 10px; }
.tool-div {
    width: 1px;
    height: 40px;
    margin: 0 3px 0 20px;
    background: #e8e8e8;
}
.ex-tools > .tool + .tool-div {
    margin: 0 0 0 2px;
}
.tool-div-last {
    margin: 0 0 0 20px;
}
.tool {
    width: 60px;
    display: flex;
    justify-content: center;
}
.tool-end {
    margin-left: 16px;
    margin-right: 3px;
}
.ex-body {
    flex: 1;
    min-height: 0;
    display: flex;
}
.ex-tree {
    width: 240px;
    flex: none;
    padding: 1px 1px 0 2px;
}
.tnode {
    height: 40px;
    display: flex;
    align-items: center;
    padding: 0 0 3px 12px;
    border: 1px solid transparent;
    white-space: nowrap;
}
.tnode.is-child {
    padding-left: 23px;
}
.tnode .ic-w {
    margin: 3px 6px 0 0;
}
.tnode.is-child .ic-w {
    margin-right: 5px;
}
.tnode.is-sel {
    background: #d7d7d7;
    border-color: #a2a2a2;
}
.tchev {
    width: 14px;
    height: 14px;
    margin: 3px 14px 0 -2px;
    color: #8f8f8f;
    stroke-width: 2.200;
}
.tchev.is-open {
    color: #333;
}
.tchev.is-none {
    visibility: hidden;
}
.tsep {
    height: 1px;
    margin: 19.500px 10px 19.500px 10px;
    border: none;
    background: #d6d6d6;
}
.ex-gutter {
    width: 20px;
    flex: none;
    background: #f8f8f8;
}
.ex-gutter-thumb {
    width: 6px;
    height: 192px;
    margin: 232px 0 0 7px;
    background: #8a8a8a;
}
.ex-files {
    flex: 1;
    min-width: 0;
    overflow: hidden;
}
.fhead {
    height: 33px;
    display: grid;
    grid-template-columns: 341px 179px 150px 98px;
    margin-bottom: 4px;
    color: #4f6074;
    font-size: 15px;
}
.fhead-cell {
    position: relative;
    padding: 0 0 0 7px;
    border-right: 1px solid #e5e5e5;
    line-height: 32px;
}
.fhead-name {
    padding-left: 41px;
}
.fhead-sort {
    position: absolute;
    left: 183px;
    top: -1px;
    color: #555;
}
.frow {
    height: 33px;
    display: flex;
    align-items: center;
    padding: 0 0 3px 25px;
    white-space: nowrap;
}
.frow .ic-w {
    margin: 3px 6px 0 0;
}
.fname {
    width: 298px;
}
.ex-rail {
    width: 22px;
    flex: none;
    background: #f7f7f7;
}
.ex-rail-thumb {
    width: 6px;
    height: 108px;
    margin: 168px 0 0 8px;
    background: #8a8a8a;
}
.ex-status {
    height: 30px;
    flex: none;
    display: flex;
    align-items: center;
    padding-left: 16px;
    color: #33475b;
    font-size: 14.500px;
}
.ex-views {
    margin-left: auto;
    margin-right: 5px;
    display: flex;
}
.ex-view {
    width: 31px;
    height: 30px;
    display: flex;
    align-items: center;
    justify-content: center;
    color: #444;
}
.ex-view.is-on {
    background: rgba(200, 228, 248, .6);
    border: 1px solid #0067c0;
}
.mintty {
    position: absolute;
    left: 993px;
    top: 417px;
    width: 744px;
    height: 447px;
    display: flex;
    flex-direction: column;
    overflow: hidden;
    border-radius: 9px;
    border: 1px solid #b5b5b5;
    border-bottom: none;
    border-left: none;
    background: #f0f0f0;
}
.mt-title {
    height: 37px;
    flex: none;
    display: flex;
    align-items: center;
    padding: 0 0 2px 10px;
    background: #f7f1e1;
    color: #222;
}
.mt-name {
    margin-left: 10px;
    margin-right: auto;
    font-family: "Noto Sans", sans-serif;
    font-size: 14.200px;
    white-space: nowrap;
}
.mt-stroke {
    stroke-width: 1.500;
    color: #222;
}
.mt-win {
    width: 57px;
    display: flex;
    justify-content: center;
}
.mt-body {
    flex: 1;
    min-height: 0;
    display: flex;
}
.mt-screen {
    flex: 1;
    margin: 0;
    padding: 17px 0 0 2px;
    background: #000;
    font-family: "Liberation Mono", monospace;
    font-size: 15px;
    line-height: 17px;
    color: #bbb;
}
.c-green { color: #00a000; }
.c-purple { color: #b045d0; }
.c-yellow { color: #bf9000; }
.c-cyan { color: #00a0a0; }
.c-grey { color: #c0c0c0; }
.mt-bar {
    width: 21px;
    flex: none;
    display: flex;
    flex-direction: column;
    align-items: center;
    justify-content: space-between;
    padding: 7px 0 7px;
    background: #f0f0f0;
}
.mt-up {
    border: 5px solid transparent;
    border-bottom: 6px solid #a6a6a6;
    border-top: none;
}
.mt-down {
    border: 5px solid transparent;
    border-top: 6px solid #a6a6a6;
    border-bottom: none;
}

/* window shadows */
.explorer {
    box-shadow: 0 18px 60px rgba(0, 0, 0, .45);
}
.mintty {
    box-shadow: 0 18px 60px rgba(0, 0, 0, .55);
}

/* annotations */
.marks {
    position: absolute;
    left: 0;
    top: 0;
    width: 1920px;
    height: 1020px;
    fill: #ff5252;
    pointer-events: none;
}
.mark-text {
    position: absolute;
    left: 1175px;
    top: 574px;
    color: #ff5252;
    font-family: "Liberation Sans", "Noto Sans CJK SC", sans-serif;
    font-size: 30.500px;
    line-height: 46px;
    white-space: nowrap;
}
```
